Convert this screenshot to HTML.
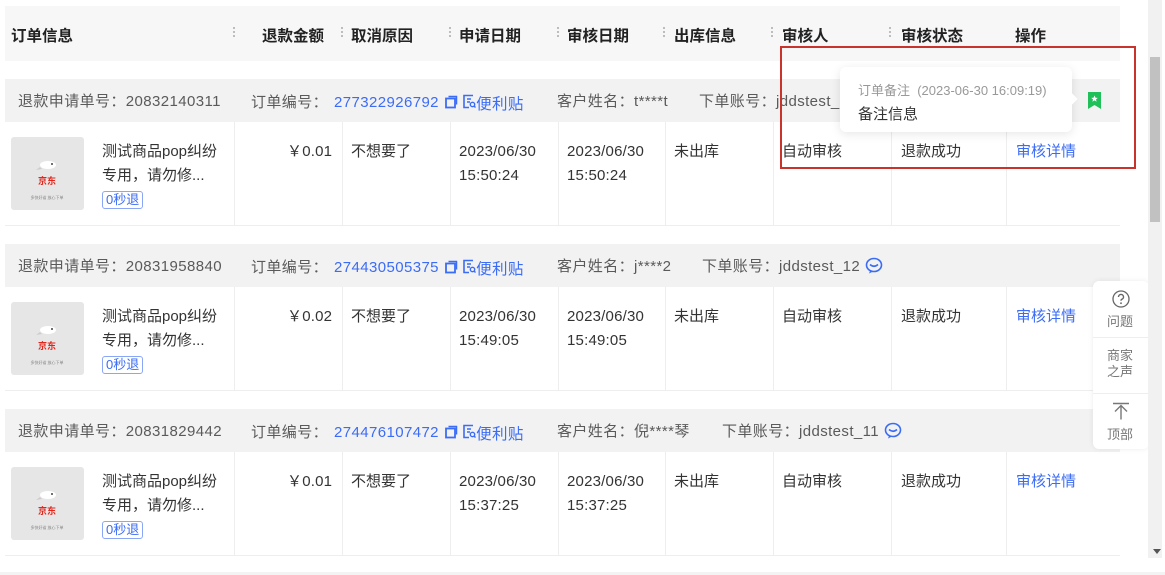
<!DOCTYPE html><html><head><meta charset="utf-8"><style>
*{margin:0;padding:0;box-sizing:border-box}
body{width:1165px;height:575px;background:#fff;position:relative;overflow:hidden;font-family:"Liberation Sans","Noto Sans CJK SC",sans-serif;color:#333;font-size:15px}
.a{position:absolute;white-space:nowrap}
.hd{position:absolute;left:5px;top:6px;width:1115px;height:55px;background:#f7f7f7}
.h{position:absolute;top:24px;font-weight:bold;font-size:15.5px;color:#222}
.dot{position:absolute;top:26px;width:2px;height:12px;background:radial-gradient(circle,#aaa 0.9px,transparent 1px) 0 0/2px 4px}
.bar{position:absolute;left:5px;width:1115px;height:43px;background:#f2f2f2;color:#555}
.bt{letter-spacing:0.4px;color:#5a5a5a}
.row{position:absolute;left:5px;width:1115px;height:104px;border-bottom:1px solid #eee}
.vl{position:absolute;top:0;width:1px;height:104px;background:#eee}
.blue{color:#3b6cf6}
.img{position:absolute;left:6px;top:15px;width:73px;height:73px;background:#e6e6e6;border-radius:3px}
.tag{position:absolute;border:1px solid #8aa6f7;color:#3b6cf6;border-radius:3px;font-size:13px;padding:0 3px;line-height:16px}
.ic{display:inline-block;vertical-align:-2px}
.dt{letter-spacing:0.2px}
</style></head><body>
<div class="hd"></div>
<div class="h" style="left:11px">订单信息</div>
<div class="dot" style="left:233px"></div>
<div class="h" style="left:262px">退款金额</div>
<div class="dot" style="left:341px"></div>
<div class="h" style="left:351px">取消原因</div>
<div class="dot" style="left:449px"></div>
<div class="h" style="left:459px">申请日期</div>
<div class="dot" style="left:557px"></div>
<div class="h" style="left:567px">审核日期</div>
<div class="dot" style="left:663px"></div>
<div class="h" style="left:674px">出库信息</div>
<div class="dot" style="left:771px"></div>
<div class="h" style="left:782px">审核人</div>
<div class="dot" style="left:889px"></div>
<div class="h" style="left:901px">审核状态</div>
<div class="h" style="left:1015px">操作</div>

<div id="g"></div>
<script>
var data=[[79,"20832140311","277322926792","t****t","jddstest_","0.01","15:50:24"],
[244,"20831958840","274430505375","j****2","jddstest_12","0.02","15:49:05"],
[409,"20831829442","274476107472","倪****琴","jddstest_11","0.01","15:37:25"]];
var h="";
var copy='<svg class="ic" width="14" height="14" viewBox="0 0 14 14"><rect x="2" y="3.5" width="9" height="9" fill="none" stroke="#3b6cf6" stroke-width="1.8"/><path d="M4.5 1.5h8v8" fill="none" stroke="#3b6cf6" stroke-width="1.5"/></svg>';
var note='<svg class="ic" width="14" height="15" viewBox="0 0 14 15"><path d="M11 1.5H2v12h5M5 5h4M5 8h3" fill="none" stroke="#3b6cf6" stroke-width="1.6"/><circle cx="10.5" cy="10.5" r="2.2" fill="none" stroke="#3b6cf6" stroke-width="1.4"/><path d="M12 12l1.5 1.5" stroke="#3b6cf6" stroke-width="1.4"/></svg>';
var smile='<svg class="ic" width="18" height="17" viewBox="0 0 18 17" style="vertical-align:-3px"><ellipse cx="9" cy="8" rx="7.5" ry="6.5" fill="none" stroke="#3b6cf6" stroke-width="1.6"/><path d="M5 7.5q4 3.5 8 0" fill="none" stroke="#3b6cf6" stroke-width="1.6"/><path d="M5 14l-1 2.5 4-2" fill="#3b6cf6"/></svg>';
data.forEach(function(d,i){
var y=d[0];
h+='<div class="bar" style="top:'+y+'px"></div>';
h+='<div class="a bt" style="left:18px;top:'+(y+11)+'px">退款申请单号：'+d[1]+'</div>';
h+='<div class="a bt" style="left:251px;top:'+(y+11)+'px">订单编号：<span class="blue" style="margin-left:6px">'+d[2]+'</span> '+copy+' '+note+'<span class="blue" style="font-size:15.5px;position:relative;top:2px">便利贴</span></div>';
h+='<div class="a bt" style="left:557px;top:'+(y+11)+'px">客户姓名：'+d[3]+'</div>';
h+='<div class="a bt" style="left:'+(i==0?699:(i==1?702:722))+'px;top:'+(y+11)+'px">下单账号：'+d[4]+(i>0?' '+smile:'')+'</div>';
var r=y+43;
h+='<div class="row" style="top:'+r+'px"><div class="img"><svg width="73" height="73" viewBox="0 0 73 73"><ellipse cx="37" cy="28" rx="8" ry="4" fill="#fff"/><path d="M29 30l-4 3 6-1z" fill="#ccc"/><circle cx="41" cy="27" r="1" fill="#444"/><text x="36" y="47" font-size="9" fill="#e1251b" text-anchor="middle" font-family="Noto Sans CJK SC,sans-serif" font-weight="bold">京东</text><text x="36" y="62" font-size="4" fill="#888" text-anchor="middle" font-family="Noto Sans CJK SC,sans-serif">多快好省 放心下单</text></svg></div>';
[229,337,445,553,660,768,886,1001].forEach(function(x){h+='<div class="vl" style="left:'+x+'px"></div>'});
h+='</div>';
h+='<div class="a" style="left:102px;top:'+(r+18)+'px;line-height:24px">测试商品pop纠纷<br>专用，请勿修...</div>';
h+='<div class="tag" style="left:102px;top:'+(r+69)+'px">0秒退</div>';
h+='<div class="a dt" style="left:287px;top:'+(r+18)+'px">￥'+d[5]+'</div>';
h+='<div class="a" style="left:351px;top:'+(r+18)+'px">不想要了</div>';
h+='<div class="a dt" style="left:459px;top:'+(r+18)+'px;line-height:24px">2023/06/30<br>'+d[6]+'</div>';
h+='<div class="a dt" style="left:567px;top:'+(r+18)+'px;line-height:24px">2023/06/30<br>'+d[6]+'</div>';
h+='<div class="a" style="left:674px;top:'+(r+18)+'px">未出库</div>';
h+='<div class="a" style="left:782px;top:'+(r+18)+'px">自动审核</div>';
h+='<div class="a" style="left:901px;top:'+(r+18)+'px">退款成功</div>';
h+='<div class="a blue" style="left:1016px;top:'+(r+18)+'px">审核详情</div>';
});
document.getElementById("g").outerHTML=h;
</script>
<svg class="a" style="left:1087px;top:92px" width="15" height="17" viewBox="0 0 15 17"><path d="M1 0h13v17l-6.5-4L1 17z" fill="#1fbf5a"/><path d="M7.5 3.5l1 2.2 2.3.2-1.8 1.5.6 2.3-2.1-1.3-2.1 1.3.6-2.3-1.8-1.5 2.3-.2z" fill="#fff"/></svg>
<div class="a" style="left:840px;top:67px;width:232px;height:65px;background:#fff;border-radius:6px;box-shadow:0 2px 10px rgba(0,0,0,.1)"></div>
<div class="a" style="left:1068px;top:95px;width:8px;height:8px;background:#fff;transform:rotate(45deg)"></div>
<div class="a" style="left:858px;top:80px;font-size:13px;color:#999">订单备注&nbsp;&nbsp;(2023-06-30 16:09:19)</div>
<div class="a" style="left:858px;top:103px;font-size:15px;color:#333">备注信息</div>
<div class="a" style="left:780px;top:46px;width:356px;height:123px;border:2px solid #c8332b"></div>
<div class="a" style="left:1093px;top:281px;width:56px;height:168px;background:#fff;border-radius:6px;box-shadow:0 0 6px rgba(0,0,0,.08)"></div>
<div class="a" style="left:1093px;top:337px;width:56px;height:1px;background:#eee"></div>
<div class="a" style="left:1093px;top:393px;width:56px;height:1px;background:#eee"></div>
<svg class="a" style="left:1112px;top:290px" width="18" height="18" viewBox="0 0 18 18"><circle cx="9" cy="9" r="8" fill="none" stroke="#666" stroke-width="1.3"/><path d="M6.5 7a2.5 2.5 0 1 1 3.3 2.3c-.6.3-.8.7-.8 1.4" fill="none" stroke="#666" stroke-width="1.4"/><circle cx="9" cy="13.2" r=".9" fill="#666"/></svg>
<div class="a" style="left:1107px;top:311px;font-size:13px;color:#777">问题</div>
<div class="a" style="left:1107px;top:348px;font-size:13px;color:#777;line-height:16px">商家<br>之声</div>
<svg class="a" style="left:1112px;top:402px" width="18" height="18" viewBox="0 0 18 18"><path d="M1 1.5h16M9 3.5v14M3 9.5l6-6 6 6" fill="none" stroke="#777" stroke-width="1.4"/></svg>
<div class="a" style="left:1107px;top:424px;font-size:13px;color:#777">顶部</div>
<div class="a" style="left:1148px;top:0;width:14px;height:558px;background:#f1f1f1"></div>
<div class="a" style="left:1150px;top:57px;width:10px;height:165px;background:#c1c1c1"></div>
<div class="a" style="left:1153px;top:549px;width:0;height:0;border-left:4px solid transparent;border-right:4px solid transparent;border-top:5px solid #555"></div>
<div class="a" style="left:0;top:572px;width:1165px;height:3px;background:#f3f3f3"></div>
</body></html>
